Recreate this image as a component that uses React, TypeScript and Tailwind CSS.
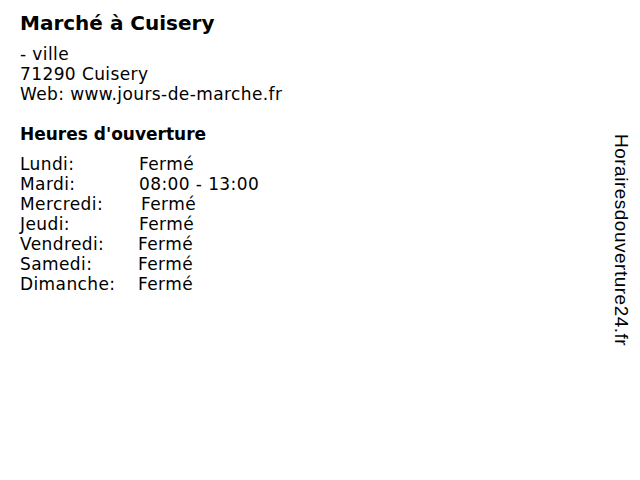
const hours: { day: string; value: string; shift: string }[] = [
  { day: "Lundi:", value: "Fermé", shift: "ml-0" },
  { day: "Mardi:", value: "08:00 - 13:00", shift: "ml-0" },
  { day: "Mercredi:", value: "Fermé", shift: "ml-[2px]" },
  { day: "Jeudi:", value: "Fermé", shift: "ml-0" },
  { day: "Vendredi:", value: "Fermé", shift: "-ml-[1px]" },
  { day: "Samedi:", value: "Fermé", shift: "-ml-[1px]" },
  { day: "Dimanche:", value: "Fermé", shift: "-ml-[1px]" },
];

export default function App() {
  return (
    <div className="relative w-[640px] h-[480px] bg-white text-black font-['DejaVu_Sans',sans-serif]">
      <div className="px-5 pt-[9px]">
        <h1 className="text-[20px] leading-[28px] font-bold">Marché à Cuisery</h1>
        <div className="mt-[7px] text-[17px] leading-[20px] tracking-[0.4px]">
          <p>- ville</p>
          <p>71290 Cuisery</p>
          <p>Web: www.jours-de-marche.fr</p>
        </div>

        <h2 className="mt-[19px] text-[17px] leading-[22px] font-bold">Heures d'ouverture</h2>
        <div className="mt-[9px] text-[17px] leading-[20px] tracking-[0.4px]">
          {hours.map((row) => (
            <div key={row.day} className="flex">
              <span className="w-[119px]">{row.day}</span>
              <span className={row.shift}>{row.value}</span>
            </div>
          ))}
        </div>
      </div>

      <div className="absolute right-[8px] top-[134px] [writing-mode:vertical-rl] text-[19px] leading-[22px] tracking-[0.5px] font-['Liberation_Sans',sans-serif]">
        Horairesdouverture24.fr
      </div>
    </div>
  );
}
